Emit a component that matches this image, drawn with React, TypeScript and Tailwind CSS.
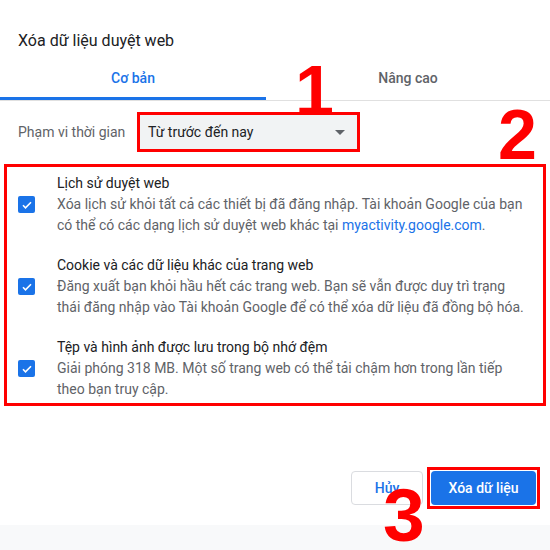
import React from 'react';

const items = [
  {
    title: 'Lịch sử duyệt web',
    lines: [
      <>Xóa lịch sử khỏi tất cả các thiết bị đã đăng nhập. Tài khoản Google của bạn</>,
      <>
        có thể có các dạng lịch sử duyệt web khác tại{' '}
        <span className="text-[#1a73e8]">myactivity.google.com</span>.
      </>,
    ],
  },
  {
    title: 'Cookie và các dữ liệu khác của trang web',
    lines: [
      <>Đăng xuất bạn khỏi hầu hết các trang web. Bạn sẽ vẫn được duy trì trạng</>,
      <>thái đăng nhập vào Tài khoản Google để có thể xóa dữ liệu đã đồng bộ hóa.</>,
    ],
  },
  {
    title: 'Tệp và hình ảnh được lưu trong bộ nhớ đệm',
    lines: [
      <>Giải phóng 318 MB. Một số trang web có thể tải chậm hơn trong lần tiếp</>,
      <>theo bạn truy cập.</>,
    ],
  },
];

function Checkbox() {
  return (
    <div className="flex h-[17px] w-[17px] items-center justify-center rounded-[2px] bg-[#1a73e8]">
      <svg width="12" height="12" viewBox="0 0 24 24" fill="none" stroke="white" strokeWidth="3.2">
        <path d="M4 12.5l5 5L20 6.5" />
      </svg>
    </div>
  );
}

function BigNumber({ n, className }: { n: string; className: string }) {
  return (
    <div
      className={`absolute font-bold leading-none text-[#ff0000] ${className}`}
      style={{ fontFamily: '"Liberation Sans", Arial, sans-serif' }}
    >
      {n}
    </div>
  );
}

export default function App() {
  return (
    <div
      className="relative flex h-[550px] w-[550px] flex-col overflow-hidden bg-white text-[#202124]"
      style={{ fontFamily: 'Roboto, "Liberation Sans", sans-serif' }}
    >
      <div className="px-[18px] pt-[29px] text-[16px] leading-[24px]">Xóa dữ liệu duyệt web</div>

      {/* tabs */}
      <div className="mt-[3px] flex border-b border-[#e0e0e0]">
        <div className="flex h-[44px] w-[266px] items-center justify-center border-b-[3px] border-[#1a73e8] pt-[3px] text-[14px] font-medium text-[#1a73e8]">
          Cơ bản
        </div>
        <div className="flex h-[44px] w-[284px] items-center justify-center text-[14px] font-medium text-[#5f6368]">
          Nâng cao
        </div>
      </div>

      {/* time range */}
      <div className="mt-[11px] flex items-center">
        <div className="w-[137px] pl-[18px] text-[14px] text-[#5f6368]">Phạm vi thời gian</div>
        <div className="flex h-[40px] w-[223px] items-center justify-between border-[3px] border-[#ff0000] bg-[#f1f3f4] pl-[8px] pr-[12px] text-[14px] text-[#202124]">
          <span>Từ trước đến nay</span>
          <svg width="10" height="5" viewBox="0 0 10 5">
            <path d="M0 0h10L5 5z" fill="#5f6368" />
          </svg>
        </div>
      </div>

      {/* options */}
      <div className="mx-[4px] mt-[12px] flex w-[542px] flex-col gap-[19px] border-[3px] border-[#ff0000] pb-[3px] pt-[6px]">
        {items.map((it) => (
          <div key={it.title} className="flex items-center">
            <div className="w-[50px] pl-[11px]">
              <Checkbox />
            </div>
            <div className="text-[14px] leading-[21px]">
              <div className="text-[#202124]">{it.title}</div>
              {it.lines.map((l, i) => (
                <div key={i} className="whitespace-nowrap text-[#5f6368]">
                  {l}
                </div>
              ))}
            </div>
          </div>
        ))}
      </div>

      {/* buttons */}
      <div className="mt-[61px] flex items-center justify-end pr-[10px]">
        <div className="flex h-[34px] w-[72px] items-center justify-center rounded-[4px] border border-[#dadce0] text-[14px] font-medium text-[#1a73e8]">
          Hủy
        </div>
        <div className="ml-[4px] border-[3px] border-[#ff0000] p-[1px]">
          <div className="flex h-[34px] w-[105px] items-center justify-center rounded-[4px] bg-[#1a73e8] text-[14px] font-medium text-white">
            Xóa dữ liệu
          </div>
        </div>
      </div>

      <div className="mt-auto h-[25px] bg-[#f8f9fa]" />

      <BigNumber n="1" className="left-[295px] top-[56px] text-[70px]" />
      <BigNumber n="2" className="left-[498px] top-[100px] text-[70px]" />
      <BigNumber n="3" className="left-[383px] top-[478px] text-[75px]" />
    </div>
  );
}
